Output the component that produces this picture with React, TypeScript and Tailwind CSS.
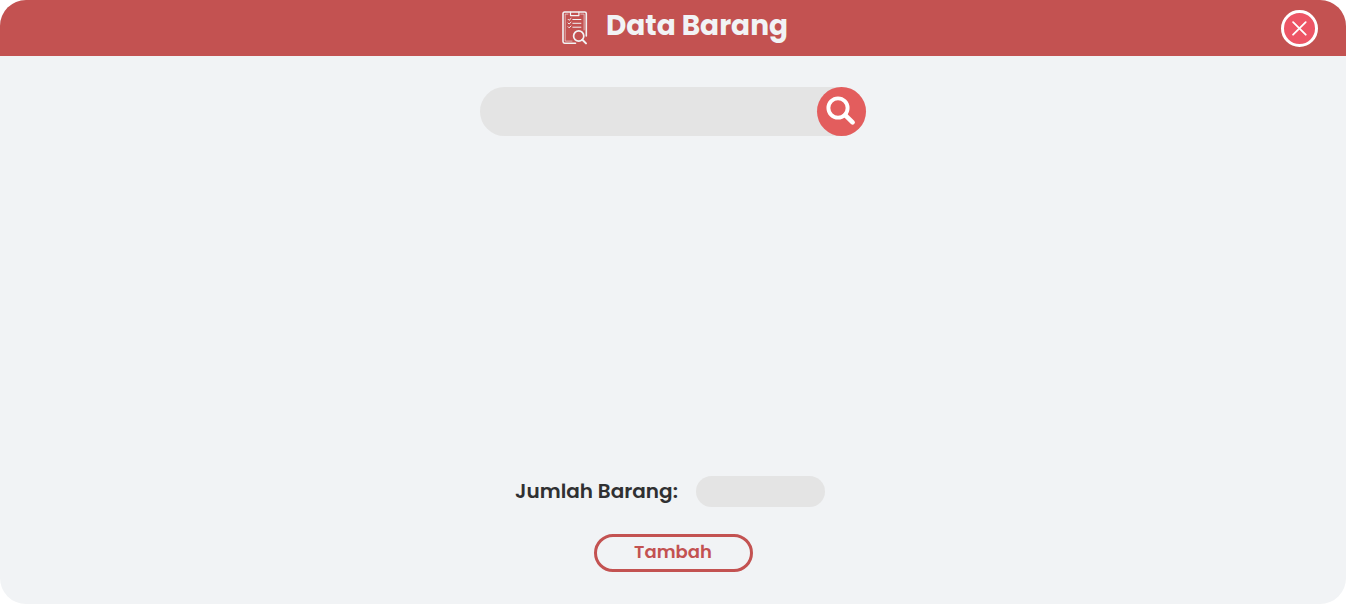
import { useState } from "react";

function ClipboardSearchIcon() {
  return (
    <svg
      className="h-[34px] w-[26px]"
      viewBox="0 0 26 34"
      fill="none"
      stroke="#f2f3f5"
      strokeLinecap="round"
      strokeLinejoin="round"
      aria-hidden="true"
    >
      <path
        d="M13.5 32.2H2.6a1.6 1.6 0 0 1-1.6-1.6V2.6A1.6 1.6 0 0 1 2.6 1h20.1a1.6 1.6 0 0 1 1.6 1.6V25"
        strokeWidth="1.6"
      />
      <path d="M6 3.1H3.2v27H10M18.8 3.1h3.3V19" strokeWidth="0.8" opacity="0.75" />
      <path d="M8.5 1v3.6h8.4V1" strokeWidth="1.2" />
      <path
        d="M6.1 8.3l1 1 1.9-1.8M6.1 12l1 1L9 11.2M6.1 15.8l1 1L9 15"
        strokeWidth="1"
      />
      <path d="M10.8 8.5h8.1M10.8 12.3h8.1M10.8 16.2h8.1" strokeWidth="1" />
      <circle cx="16.7" cy="25" r="5.1" strokeWidth="1.7" />
      <path d="M20.4 28.8l3.6 3.6" strokeWidth="2" />
    </svg>
  );
}

export default function App() {
  const [query, setQuery] = useState("");
  const [total, setTotal] = useState("");

  return (
    <div className="min-h-screen bg-white font-[Poppins,Inter,sans-serif]">
      <div className="flex min-h-screen flex-col overflow-hidden rounded-[26px] bg-[#f1f3f5]">
        <header className="grid h-14 grid-cols-[1fr_auto_1fr] items-center bg-[#c35251] px-7">
          <div className="col-start-2 flex items-center gap-[18px] pl-1">
            <ClipboardSearchIcon />
            <h1 className="pb-1 text-[28px] leading-9 font-bold text-[#f1f3f5]">Data Barang</h1>
          </div>
          <button
            type="button"
            aria-label="Tutup"
            className="flex size-[37px] items-center justify-center justify-self-end rounded-full border-3 border-white bg-[#ed5565]"
          >
            <svg
              className="size-[15px]"
              viewBox="0 0 15 15"
              stroke="white"
              strokeWidth="1.8"
              strokeLinecap="round"
              aria-hidden="true"
            >
              <path d="M1.1 1.1l12.6 12.6M13.7 1.1l-12.6 12.6" />
            </svg>
          </button>
        </header>

        <main className="flex grow flex-col items-center justify-between pt-[31px] pb-8">
          <form
            role="search"
            onSubmit={(e) => e.preventDefault()}
            className="flex w-full max-w-[386px] rounded-full bg-[#e4e4e4]"
          >
            <input
              type="search"
              aria-label="Cari barang"
              value={query}
              onChange={(e) => setQuery(e.target.value)}
              className="min-w-0 grow bg-transparent px-6 text-lg text-[#303032] outline-none"
            />
            <button
              type="submit"
              aria-label="Cari"
              className="flex size-[49px] shrink-0 items-center justify-center rounded-full bg-[#e35d5d]"
            >
              <svg
                className="size-[31px]"
                viewBox="0 0 31 31"
                fill="none"
                stroke="white"
                strokeLinecap="round"
                aria-hidden="true"
              >
                <circle cx="12" cy="12" r="9.6" strokeWidth="3.9" />
                <path d="M19.2 19.2l7.4 7.2" strokeWidth="4.6" />
              </svg>
            </button>
          </form>

          <div className="flex flex-col items-center gap-[27px]">
            <div className="flex items-center gap-[18px] pr-1.5">
              <label htmlFor="jumlah" className="pb-0.5 text-xl font-semibold text-[#303032]">
                Jumlah Barang:
              </label>
              <input
                id="jumlah"
                type="text"
                value={total}
                onChange={(e) => setTotal(e.target.value)}
                className="h-[31px] w-[129px] rounded-full bg-[#e4e4e4] px-4 text-[#303032] outline-none"
              />
            </div>
            <button
              type="button"
              className="flex h-[38px] w-[159px] items-center justify-center rounded-full border-3 border-[#c35251] pb-0.5 text-lg font-semibold text-[#c35251]"
            >
              Tambah
            </button>
          </div>
        </main>
      </div>
    </div>
  );
}
